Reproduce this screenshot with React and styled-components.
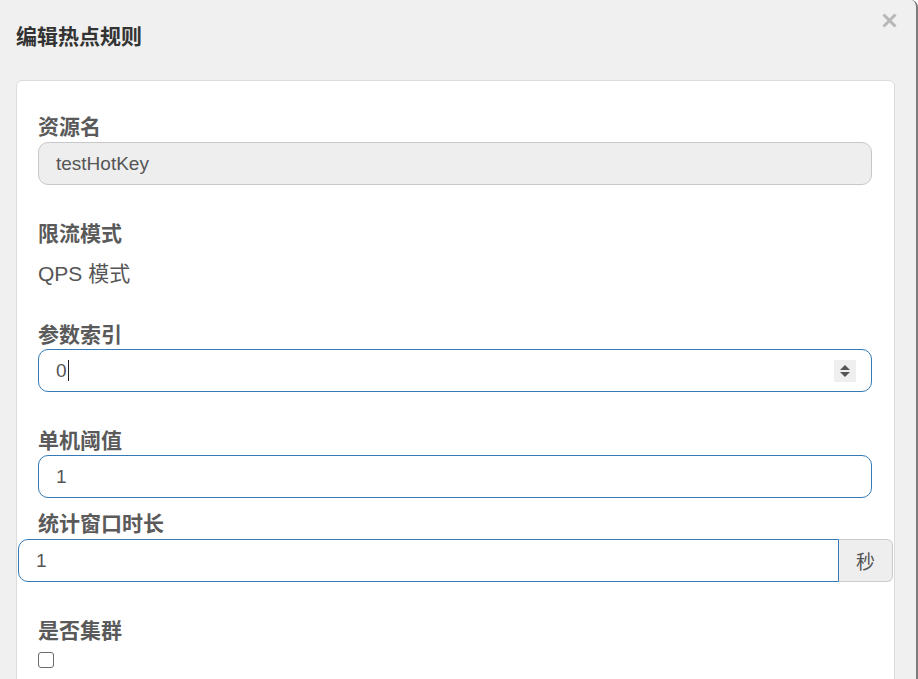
import styled, { createGlobalStyle } from "styled-components";

const GlobalStyle = createGlobalStyle`
    html, body {
        margin: 0;
        padding: 0;
        background: #fff;
        height: 100%;
        overflow: hidden;
    }
    body {
        font-family: "Liberation Sans", "Noto Sans CJK SC", sans-serif;
    }
`;

const Dialog = styled.div`
    width: 918px;
    height: 679px;
    box-sizing: border-box;
    background-color: #f0f0f0;
    border-right: 2px solid #7c7c7c;
    border-top-right-radius: 7px;
    padding: 22px 22px 0 16px;
    position: relative;
    overflow: hidden;
`;
const Title = styled.h4`
    margin: 0 0 28px 0;
    font-size: 21px;
    line-height: 30px;
    font-weight: 700;
    color: #333;
    font-family: "Liberation Sans", "Noto Sans CJK SC", sans-serif;
`;
const CloseBtn = styled.div`
    position: absolute;
    top: 13px;
    right: 19px;
    width: 15px;
    height: 15px;
    display: flex;
`;
const Card = styled.div`
    width: 879px;
    box-sizing: border-box;
    background-color: #fff;
    border: 1px solid #dcdcdc;
    border-radius: 6px;
    padding: 34px 22px 30px 21px;
    height: 700px;
`;
const FormGroup = styled.div`
    margin: 0 0 ${(p) => (p.tight ? "14px" : "37px")} 0;
`;
const Label = styled.div`
    font-size: 21px;
    line-height: 24px;
    font-weight: 700;
    color: #5a5a5a;
    margin: 0 0 ${(p) => p.gap ?? 3}px 0;
`;
const StaticText = styled.div`
    font-size: 21px;
    line-height: 24px;
    color: #555;
    margin: 16px 0 0 0;
`;
const Field = styled.div`
    height: 43px;
    box-sizing: border-box;
    display: flex;
    align-items: center;
    padding: 0 16px 0 17px;
    font-size: 19px;
    color: #555;
    background-color: ${(p) => (p.disabled ? "#eee" : "#fff")};
    border: 1px solid ${(p) => (p.focus ? "#337ab7" : "#c8c8c8")};
    border-radius: 10px;
`;
const FieldText = styled.span`
    flex: 1;
    display: flex;
    align-items: center;
`;
const Caret = styled.span`
    display: inline-block;
    width: 1px;
    height: 21px;
    background: #222;
    margin-left: 1px;
`;
const Spinner = styled.div`
    width: 22px;
    height: 22px;
    background: #efefef;
    display: flex;
    flex-direction: column;
    align-items: center;
    justify-content: center;
    gap: 2px;
    margin-right: -1px;
`;
const Arrow = styled.span`
    width: 0;
    height: 0;
    border-left: 5px solid transparent;
    border-right: 5px solid transparent;
    ${(p) => (p.up ? "border-bottom: 5px solid #555;" : "border-top: 5px solid #555;")}
`;
const InputGroup = styled.div`
    display: flex;
    margin: 0 -21px 0 -20px;
`;
const GroupField = styled(Field)`
    flex: 1;
    border-top-right-radius: 0;
    border-bottom-right-radius: 0;
`;
const Addon = styled.div`
    width: 54px;
    height: 43px;
    box-sizing: border-box;
    display: flex;
    align-items: center;
    justify-content: center;
    background: #eee;
    border: 1px solid #ccc;
    border-left: none;
    border-radius: 0 6px 6px 0;
    font-size: 19px;
    color: #555;
`;
const Checkbox = styled.div`
    width: 16px;
    height: 16px;
    box-sizing: border-box;
    border: 1.5px solid #6b6b6b;
    border-radius: 3px;
    background: #fff;
`;

export default () => {
    return (
        <>
            <GlobalStyle />
            <Dialog>
                <CloseBtn>
                    <svg width="15" height="15" viewBox="0 0 15 15">
                        <path d="M1.5 1.5 L13.5 13.5 M13.5 1.5 L1.5 13.5" stroke="#b8b8b8" strokeWidth="3" />
                    </svg>
                </CloseBtn>
                <Title>编辑热点规则</Title>
                <Card>
                    <FormGroup>
                        <Label>资源名</Label>
                        <Field disabled>
                            <FieldText>testHotKey</FieldText>
                        </Field>
                    </FormGroup>
                    <FormGroup>
                        <Label gap={0}>限流模式</Label>
                        <StaticText>QPS 模式</StaticText>
                    </FormGroup>
                    <FormGroup>
                        <Label gap={2}>参数索引</Label>
                        <Field focus>
                            <FieldText>
                                0<Caret />
                            </FieldText>
                            <Spinner>
                                <Arrow up />
                                <Arrow />
                            </Spinner>
                        </Field>
                    </FormGroup>
                    <FormGroup tight>
                        <Label gap={2}>单机阈值</Label>
                        <Field focus>
                            <FieldText>1</FieldText>
                        </Field>
                    </FormGroup>
                    <FormGroup>
                        <Label>统计窗口时长</Label>
                        <InputGroup>
                            <GroupField focus>
                                <FieldText>1</FieldText>
                            </GroupField>
                            <Addon>秒</Addon>
                        </InputGroup>
                    </FormGroup>
                    <FormGroup>
                        <Label gap={9}>是否集群</Label>
                        <Checkbox />
                    </FormGroup>
                </Card>
            </Dialog>
        </>
    );
};
